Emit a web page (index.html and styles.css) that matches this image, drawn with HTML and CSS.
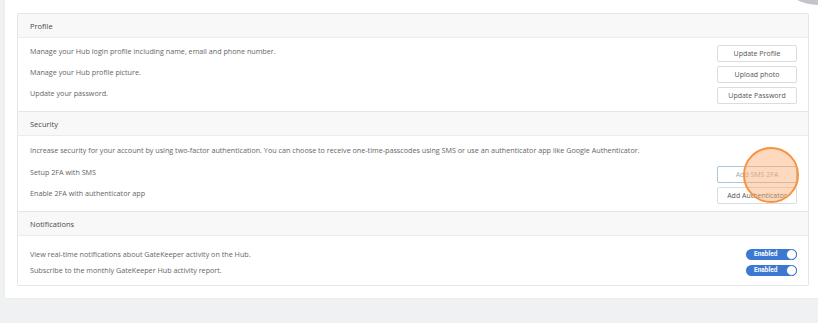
FILE: index.html
```html
<!DOCTYPE html>
<html>
<head>
<meta charset="utf-8">
<link rel="stylesheet" href="styles.css">
</head>
<body>
<div class="corner-dot"></div>
<div class="panel">
  <div class="card">
    <section class="section">
      <div class="section-head">Profile</div>
      <div class="section-body">
        <div class="row"><span class="label">Manage your Hub login profile including name, email and phone number.</span><button class="btn">Update Profile</button></div>
        <div class="row"><span class="label">Manage your Hub profile picture.</span><button class="btn">Upload photo</button></div>
        <div class="row"><span class="label">Update your password.</span><button class="btn">Update Password</button></div>
      </div>
    </section>
    <section class="section">
      <div class="section-head">Security</div>
      <div class="section-body">
        <div class="row desc"><span>Increase security for your account by using two-factor authentication. You can choose to receive one-time-passcodes using SMS or use an authenticator app like Google Authenticator.</span></div>
        <div class="row"><span class="label">Setup 2FA with SMS</span><button class="btn btn-focus">Add SMS 2FA</button></div>
        <div class="row"><span class="label">Enable 2FA with authenticator app</span><button class="btn">Add Authenticator</button></div>
        <div class="click-ring"></div>
      </div>
    </section>
    <section class="section">
      <div class="section-head">Notifications</div>
      <div class="section-body notif">
        <div class="row row-sm"><span>View real-time notifications about GateKeeper activity on the Hub.</span><span class="toggle"><span class="toggle-label">Enabled</span><span class="knob"></span></span></div>
        <div class="row row-sm"><span>Subscribe to the monthly GateKeeper Hub activity report.</span><span class="toggle"><span class="toggle-label">Enabled</span><span class="knob"></span></span></div>
      </div>
    </section>
  </div>
</div>
</body>
</html>
```
FILE: styles.css
```css
* { box-sizing: border-box; }
html, body { margin: 0; padding: 0; }
body {
  background: #f0f1f3;
  font-family: "Open Sans", "Noto Sans", sans-serif;
  font-size: 7.2px;
  color: #666;
  width: 818px;
  height: 323px;
  overflow: hidden;
  position: relative;
}
.corner-dot {
  position: absolute;
  left: 785px;
  top: -36px;
  width: 70px;
  height: 41px;
  border-radius: 50%;
  background: #c4c5ca;
  z-index: 2;
}
.panel {
  margin-left: 5px;
  background: #fff;
  padding: 13px 9px 12px 12px;
  box-shadow: 0 0 2px rgba(0,0,0,0.06);
}
.card {
  border: 1px solid #e6e6e6;
  border-radius: 2px;
}
.section + .section { border-top: 1px solid #e6e6e6; }
.section-head {
  height: 24px;
  display: flex;
  align-items: center;
  padding-left: 12px;
  background: #f8f8f8;
  border-bottom: 1px solid #ececec;
  color: #4a4a4a;
  font-size: 7.5px;
}
.section-body {
  padding: 5px 11px 5px 12px;
  position: relative;
}
.row {
  display: flex;
  align-items: center;
  justify-content: space-between;
  height: 21px;
}
.label { padding-bottom: 5px; }
.row.desc { height: 23px; align-items: flex-start; padding-top: 4px; }
.row-sm { height: 16px; }
.section-body.notif { padding-top: 10px; padding-bottom: 7px; }
.btn {
  width: 80px;
  height: 17px;
  padding: 0;
  margin: 0;
  background: #fff;
  border: 1px solid #dcdcdc;
  border-radius: 2px;
  font-family: inherit;
  font-size: 7px;
  color: #555;
}
.btn-focus {
  border-color: #a9c7d9;
  color: #a9a9a9;
}
.click-ring {
  position: absolute;
  left: 725px;
  top: 11px;
  width: 56px;
  height: 56px;
  border-radius: 50%;
  background: rgba(252, 170, 110, 0.45);
  border: 2px solid #f69443;
}
.toggle {
  position: relative;
  width: 51px;
  height: 11px;
  border-radius: 6px;
  background: #3b78cf;
  display: flex;
  align-items: center;
}
.toggle-label {
  color: #fff;
  font-family: "Roboto", "Noto Sans", sans-serif;
  font-weight: 700;
  font-size: 6.5px;
  padding-left: 8px;
}
.knob {
  position: absolute;
  right: 0;
  top: 0;
  width: 11px;
  height: 11px;
  border-radius: 50%;
  background: #fff;
  border: 1px solid #3b78cf;
}
```
